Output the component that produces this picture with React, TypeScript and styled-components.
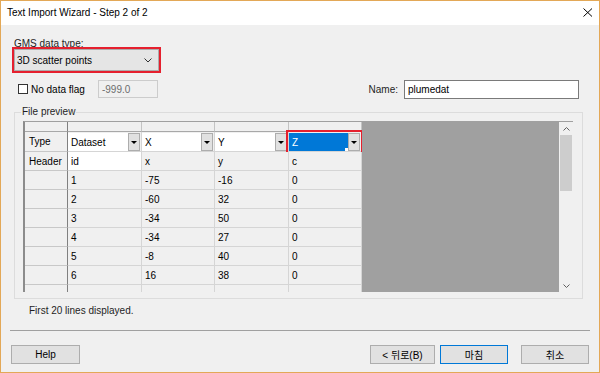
import styled, { createGlobalStyle } from 'styled-components';

const GlobalStyle = createGlobalStyle`
  html, body {
    margin: 0;
    padding: 0;
  }
  body {
    font-family: "Liberation Sans", "Noto Sans CJK KR", Arial, sans-serif;
    font-size: 10px;
    color: #000;
  }
  * {
    box-sizing: border-box;
  }
`;

const GRID_COLS = '43px 74px 73px 74px 73px';

const columns = [
  { type: 'Dataset', header: 'id' },
  { type: 'X', header: 'x' },
  { type: 'Y', header: 'y' },
  { type: 'Z', header: 'c', selected: true },
];

const dataRows = [
  ['1', '-75', '-16', '0'],
  ['2', '-60', '32', '0'],
  ['3', '-34', '50', '0'],
  ['4', '-34', '27', '0'],
  ['5', '-8', '40', '0'],
  ['6', '16', '38', '0'],
  ['', '', '', ''],
];

export default function App() {
  return (
    <>
      <GlobalStyle />
      <DialogWindow>
        <TitleBar>
          <span>Text Import Wizard - Step 2 of 2</span>
          <svg width="10" height="9" viewBox="0 0 10 9">
            <path d="M0.5 0.5 L9 8.5 M9 0.5 L0.5 8.5" stroke="#000" strokeWidth="1" fill="none" />
          </svg>
        </TitleBar>

        <Content>
          <FieldLabel>GMS data type:</FieldLabel>
          <RedFrame>
            <DataTypeCombo>
              <span>3D scatter points</span>
              <svg width="8" height="5" viewBox="0 0 8 5">
                <polyline points="0.5,0.5 4,4 7.5,0.5" stroke="#333" strokeWidth="1" fill="none" />
              </svg>
            </DataTypeCombo>
          </RedFrame>

          <OptionsRow>
            <CheckBox />
            <CheckLabel>No data flag</CheckLabel>
            <TextInput $width={60} $disabled>-999.0</TextInput>
            <Spacer />
            <NameLabel>Name:</NameLabel>
            <TextInput $width={175}>plumedat</TextInput>
          </OptionsRow>

          <GroupBox>
            <GroupLegend>File preview</GroupLegend>
            <Preview>
              <Table>
                <GridRow $h={10}>
                  <ColHead $first />
                  {columns.map((c) => (
                    <ColHead key={c.type} />
                  ))}
                </GridRow>
                <GridRow $h={20}>
                  <RowHead>Type</RowHead>
                  {columns.map((c) => (
                    <ComboCell key={c.type}>
                      <ComboBox $highlight={c.selected}>
                        <ComboField $selected={c.selected}>{c.type}</ComboField>
                        <ComboButton>
                          <DownTriangle />
                        </ComboButton>
                      </ComboBox>
                    </ComboCell>
                  ))}
                </GridRow>
                <GridRow $h={19}>
                  <RowHead>Header</RowHead>
                  {columns.map((c, i) => (
                    <Cell key={c.type} $white={i === 0}>
                      {c.header}
                    </Cell>
                  ))}
                </GridRow>
                {dataRows.map((row, r) => (
                  <GridRow key={r} $h={19}>
                    <RowHead />
                    {row.map((v, i) => (
                      <Cell key={i}>{v}</Cell>
                    ))}
                  </GridRow>
                ))}
              </Table>
              <EmptyArea />
              <ScrollBar>
                <ScrollArrow>
                  <svg width="7" height="4" viewBox="0 0 7 4">
                    <polyline points="0.5,3.5 3.5,0.5 6.5,3.5" stroke="#606060" strokeWidth="1" fill="none" />
                  </svg>
                </ScrollArrow>
                <ScrollThumb />
                <Spacer />
                <ScrollArrow>
                  <svg width="7" height="4" viewBox="0 0 7 4">
                    <polyline points="0.5,0.5 3.5,3.5 6.5,0.5" stroke="#606060" strokeWidth="1" fill="none" />
                  </svg>
                </ScrollArrow>
              </ScrollBar>
            </Preview>
          </GroupBox>

          <FootNote>First 20 lines displayed.</FootNote>
          <Separator />

          <ButtonRow>
            <DialogButton $width={69}>Help</DialogButton>
            <Spacer />
            <DialogButton $width={65}>&lt; 뒤로(B)</DialogButton>
            <DialogButton $width={68} $default>마침</DialogButton>
            <DialogButton $width={68} $gap={13}>취소</DialogButton>
          </ButtonRow>
        </Content>
      </DialogWindow>
    </>
  );
}

const DialogWindow = styled.div`
  width: 600px;
  height: 373px;
  border: 1px solid #e3a857;
  background: #f0f0f0;
  display: flex;
  flex-direction: column;
  overflow: hidden;
`;

const TitleBar = styled.div`
  height: 24px;
  flex: none;
  background: #fff;
  display: flex;
  align-items: center;
  justify-content: space-between;
  padding: 0 6px 1px 6px;
  font-size: 10px;
`;

const Content = styled.div`
  flex: 1;
  display: flex;
  flex-direction: column;
  padding: 0 9px;
`;

const FieldLabel = styled.div`
  margin: 14px 0 -2px 4px;
  line-height: 10px;
  color: #1e1e1e;
`;

const RedFrame = styled.div`
  width: 149px;
  height: 26px;
  margin-left: 2px;
  border: 2px solid #e5202e;
`;

const DataTypeCombo = styled.div`
  height: 100%;
  background: #e5e5e5;
  border: 1px solid #acacac;
  display: flex;
  align-items: center;
  justify-content: space-between;
  padding: 0 6px 0 2px;
`;

const OptionsRow = styled.div`
  height: 20px;
  margin: 6px 0 0 0;
  display: flex;
  align-items: center;
  padding-right: 11px;
`;

const CheckBox = styled.div`
  width: 10px;
  height: 10px;
  margin-left: 8px;
  background: #fff;
  border: 1px solid #333;
`;

const CheckLabel = styled.span`
  margin-left: 3px;
`;

const TextInput = styled.div<{ $width: number; $disabled?: boolean }>`
  width: ${(p) => p.$width}px;
  height: ${(p) => (p.$disabled ? 18 : 19)}px;
  margin-left: ${(p) => (p.$disabled ? 13 : 6)}px;
  display: flex;
  align-items: center;
  padding-left: 3px;
  background: ${(p) => (p.$disabled ? '#f0f0f0' : '#fff')};
  border: 1px solid ${(p) => (p.$disabled ? '#cccccc' : '#7a7a7a')};
  color: ${(p) => (p.$disabled ? '#6d6d6d' : '#000')};
`;

const NameLabel = styled.span`
  color: #1e1e1e;
`;

const Spacer = styled.div`
  flex: 1;
`;

const GroupBox = styled.fieldset`
  margin: 7px 7px 0 4px;
  padding: 3px 9px 6px 8px;
  border: 1px solid #dcdcdc;
  min-width: 0;
`;

const GroupLegend = styled.legend`
  margin-left: -2px;
  padding: 0 1px;
  line-height: 12px;
  color: #1e1e1e;
`;

const Preview = styled.div`
  height: 171px;
  display: flex;
  border-top: 1px solid #a0a0a0;
  border-left: 2px solid #8c8c8c;
  overflow: hidden;
`;

const Table = styled.div`
  display: flex;
  flex-direction: column;
  flex: none;
`;

const GridRow = styled.div<{ $h: number }>`
  display: grid;
  grid-template-columns: ${GRID_COLS};
  height: ${(p) => p.$h}px;
  flex: none;
`;

const Cell = styled.div<{ $white?: boolean }>`
  display: flex;
  align-items: center;
  padding-left: 3px;
  white-space: nowrap;
  background: ${(p) => (p.$white ? '#fff' : '#f0f0f0')};
  border-right: 1px solid #d5d5d5;
  border-bottom: 1px solid #d5d5d5;
`;

const RowHead = styled(Cell)`
  padding-left: 4px;
  border-right-color: #808080;
  border-bottom-color: #c8c8c8;
`;

const ColHead = styled(Cell)<{ $first?: boolean }>`
  border-right-color: ${(p) => (p.$first ? '#808080' : '#c4c4c4')};
  border-bottom-color: #a8a8a8;
`;

const ComboCell = styled.div`
  display: flex;
  padding: 1px 1px 0 0;
  background: #f0f0f0;
  border-right: 1px solid #d5d5d5;
  border-bottom: 1px solid #d5d5d5;
`;

const ComboBox = styled.div<{ $highlight?: boolean }>`
  flex: 1;
  display: flex;
  outline: ${(p) => (p.$highlight ? '2px solid #e5202e' : 'none')};
  outline-offset: 1px;
`;

const ComboField = styled.div<{ $selected?: boolean }>`
  flex: 1;
  position: relative;
  display: flex;
  align-items: center;
  padding-left: 3px;
  background: ${(p) => (p.$selected ? '#0078d7' : '#fff')};
  color: ${(p) => (p.$selected ? '#fff' : '#000')};

  &::after {
    content: '';
    display: ${(p) => (p.$selected ? 'block' : 'none')};
    position: absolute;
    right: 0;
    bottom: 0;
    width: 3px;
    height: 3px;
    background: #fff;
  }
`;

const ComboButton = styled.div`
  width: 12px;
  flex: none;
  display: flex;
  align-items: center;
  justify-content: center;
  background: #e1e1e1;
  border: 1px solid #adadad;
`;

const DownTriangle = styled.div`
  width: 0;
  height: 0;
  border-left: 3px solid transparent;
  border-right: 3px solid transparent;
  border-top: 3px solid #000;
`;

const EmptyArea = styled.div`
  flex: 1;
  background: #a0a0a0;
`;

const ScrollBar = styled.div`
  width: 14px;
  flex: none;
  display: flex;
  flex-direction: column;
  align-items: center;
  background: #f0f0f0;
`;

const ScrollArrow = styled.div`
  height: 13px;
  width: 100%;
  display: flex;
  align-items: center;
  justify-content: center;
`;

const ScrollThumb = styled.div`
  width: 12px;
  height: 56px;
  background: #cdcdcd;
`;

const FootNote = styled.div`
  margin: 6px 0 0 19px;
  line-height: 12px;
  color: #1e1e1e;
`;

const Separator = styled.div`
  margin-top: 13px;
  border-top: 1px solid #a0a0a0;
`;

const ButtonRow = styled.div`
  height: 19px;
  margin-top: 14px;
  display: flex;
  padding: 0 1px 0 1px;
`;

const DialogButton = styled.div<{ $width: number; $default?: boolean; $gap?: number }>`
  width: ${(p) => p.$width}px;
  margin-left: ${(p) => p.$gap ?? 5}px;
  display: flex;
  align-items: center;
  justify-content: center;
  background: #e1e1e1;
  border: 1px solid ${(p) => (p.$default ? '#0078d7' : '#adadad')};
  color: #000;

  &:first-child {
    margin-left: 0;
  }
`;
